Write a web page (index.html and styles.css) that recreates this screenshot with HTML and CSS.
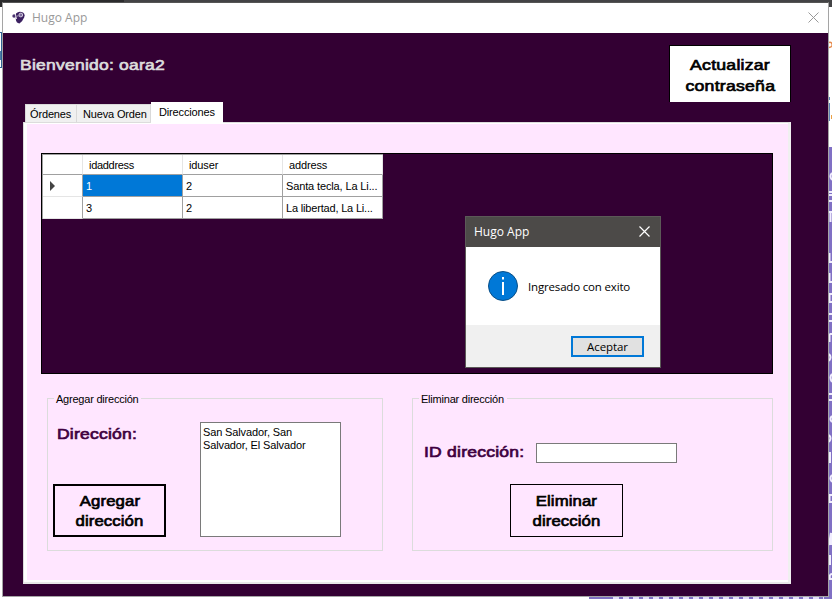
FILE: index.html
```html
<!DOCTYPE html>
<html lang="es">
<head>
<meta charset="utf-8">
<title>Hugo App</title>
<link rel="stylesheet" href="styles.css">
</head>
<body>
<div class="desktop" aria-hidden="true">
  <div class="tab-strip"></div>
  <div class="left-edge"></div>
  <div class="right-edge"></div>
  <div class="bottom-edge"></div>
  <svg class="scraps" width="832" height="599" viewBox="0 0 832 599">
    <path d="M829 42.500q2-1 3 1.500t-3 3.500" fill="none" stroke="#e68a4c" stroke-width="1.500"/>
    <path d="M829 97h1v3h-1zM829 103h1v18h-1z" fill="#5b83b5"/>
    <path d="M831 115h1v4h-1z" fill="#eba045"/>
    <g fill="none" stroke="#f1edff" stroke-width="2">
      <path d="M832 173q-3 3 0 7M829 192h3M829 195h3M829 201h3M829 212h3M830.500 212v10M829.500 253v9h3M829.500 273v9h3M832 294h-2.500v8h2.500M829 314h3M829 321h3M829.500 334v8M829.500 334h3M829 354q3 3 0 7M832 374q-3 3 0 8M829 394h3M829 400h3M832 416q-3 3 0 6M829 435q3 3 0 7M830 452v11M832 475q-3 3 0 7M832 495h-2.500v7h2.500M829 545l2-12v12M830 555v10M832 574q-3 0-2 5h2"/>
    </g>
  </svg>
</div>
<main class="window">
  <header class="titlebar">
    <svg class="logo" width="14" height="14" viewBox="0 0 14 14">
      <path d="M4 2.500Q7-.5 11 1.500q2.300 1.600 1.200 4.700Q10.800 10 7.500 12.500 4 12 3.800 8z" fill="#3b2060"/>
      <circle cx="2.100" cy="5" r="1.800" fill="#4b3470"/>
      <path d="M3.400 3.500l1.200 4.500" stroke="#fff" stroke-width=".8"/>
      <circle cx="8.800" cy="4" r="1.900" fill="#7d6c9b" stroke="#e9e4f0" stroke-width=".8"/>
      <path d="M4.500 5h2" stroke="#c9bfd8" stroke-width=".8"/>
    </svg>
    <span class="title">Hugo App</span>
    <svg class="close" width="11" height="11" viewBox="0 0 11 11"><path d="M.5.5l10 10M10.500.5l-10 10" stroke="#999" fill="none"/></svg>
  </header>
  <div class="client">
    <div class="top">
      <h1 class="welcome">Bienvenido: oara2</h1>
      <button class="btn btn-update"><span>Actualizar</span><span>contraseña</span></button>
    </div>
    <nav class="tabs">
      <span class="tab tab-a">Órdenes</span><span class="tab tab-b">Nueva Orden</span><span class="tab active">Direcciones</span>
    </nav>
    <section class="panel">
      <div class="page">
        <div class="datagrid">
          <div class="table">
            <div class="cell head"></div><div class="cell head tight">idaddress</div><div class="cell head">iduser</div><div class="cell head">address</div>
            <div class="cell rowhead"><svg width="5" height="10" viewBox="0 0 5 10"><path d="M0 0l5 5-5 5z" fill="#444"/></svg></div><div class="cell selected">1</div><div class="cell">2</div><div class="cell"><span>Santa tecla, La Li...</span></div>
            <div class="cell rowhead"></div><div class="cell">3</div><div class="cell">2</div><div class="cell snug"><span>La libertad, La Li...</span></div>
          </div>
        </div>
        <div class="groups">
          <fieldset class="group group-add">
            <legend>Agregar dirección</legend>
            <div class="col">
              <label class="label dir">Dirección:</label>
              <button class="btn btn-add"><span>Agregar</span><span>dirección</span></button>
            </div>
            <div class="memo"><span>San Salvador, San</span><span>Salvador, El Salvador</span></div>
          </fieldset>
          <fieldset class="group group-del">
            <legend>Eliminar dirección</legend>
            <div class="idrow"><div class="idl"><label class="label">ID dirección:</label></div><div class="input"></div></div>
            <button class="btn btn-del"><span>Eliminar</span><span>dirección</span></button>
          </fieldset>
        </div>
      </div>
    </section>
  </div>
</main>
<div class="dialog" role="dialog">
  <div class="dlg-title"><span>Hugo App</span>
    <svg width="11" height="11" viewBox="0 0 11 11"><path d="M.5.5l10 10M10.500.5l-10 10" stroke="#fff" stroke-width="1.200" fill="none"/></svg>
  </div>
  <div class="dlg-body">
    <svg width="30" height="30" viewBox="0 0 30 30"><circle cx="15" cy="15" r="14.500" fill="#0078d7" stroke="#0b4f86"/><path d="M14 6h2v2.500h-2zM14 11h2v13h-2z" fill="#fff"/></svg>
    <span>Ingresado con exito</span>
  </div>
  <div class="dlg-foot"><button class="ok">Aceptar</button></div>
</div>
</body>
</html>
```
FILE: styles.css
```css
* { box-sizing: border-box; }
body { margin: 0; width: 832px; height: 599px; overflow: hidden; position: relative; background: #fff; font: 11px/13px "Liberation Sans", sans-serif; color: #000; }
button { font: inherit; color: inherit; padding: 0; margin: 0; border-radius: 0; }
span { white-space: nowrap; }

.desktop { position: absolute; inset: 0; }
.tab-strip { position: absolute; left: 0; top: 0; width: 832px; height: 7px; background: linear-gradient(90deg, #2b2b2d 124px, #434345 124px); }
.left-edge { position: absolute; left: 0; top: 32px; width: 2px; height: 36px; background: linear-gradient(#fff 0 18px, #4d7ca7 18px 27px, #fff 27px); border: 1px solid #2f6496; border-width: 1px 1px 1px 0; }
.right-edge { position: absolute; left: 829px; top: 147px; width: 3px; height: 452px; background: #8070c4; }
.bottom-edge { position: absolute; left: 589px; top: 597px; width: 243px; height: 2px; background: linear-gradient(#8070c4, #8070c4) no-repeat 0 0 / 22px 2px, linear-gradient(#8070c4, #8070c4) no-repeat 235px 0 / 8px 2px, repeating-linear-gradient(90deg, #8070c4 0 4px, #e4defa 4px 10px); }
.scraps { position: absolute; left: 0; top: 0; }

.window { position: relative; margin-left: 2px; top: 2px; width: 827px; height: 595px; border: 1px solid #a5a5a5; border-top-color: #555; background: #330033; display: flex; flex-direction: column; }
.titlebar { height: 30px; background: #fff; display: flex; align-items: center; padding: 0 9px 1px 9px; }
.titlebar .title { flex: 1; margin-left: 6px; font: 12px/16px "Open Sans", sans-serif; color: #999; }
.client { padding: 12px 37px 0 20px; }
.top { display: flex; justify-content: space-between; align-items: flex-start; margin-left: -4px; }
.welcome, .label, .btn { font: 15.500px/20px "Liberation Sans", sans-serif; letter-spacing: .2px; -webkit-text-stroke: .7px; white-space: nowrap; }
.welcome, .label { transform: scaleX(1.13); transform-origin: left; }
.welcome { margin: 10px 0 0 1px; color: #dcdcdc; }
.btn { display: flex; flex-direction: column; align-items: center; justify-content: center; background: transparent; border: 1px solid #000; }
.btn span { transform: scaleX(1.08); }
.btn-update { width: 122px; height: 57px; background: #fff; border-bottom: 0; padding-top: 2px; line-height: 21px; }
.btn-update span { transform: scaleX(1.14); }

.tabs { display: flex; align-items: flex-end; height: 20px; margin-left: 2px; letter-spacing: -.15px; }
.tab { height: 18px; background: #f0f0f0; border: 1px solid #d9d9d9; border-width: 1px 1px 0 0; padding: 3px 0 0 6px; }
.tab-a { width: 52px; border-left-width: 1px; padding-left: 4px; }
.tab-b { width: 74px; }
.tab.active { width: 72px; height: 21px; margin: 0 0 -1px; background: #fff; border-color: #fff; padding: 3px 0 0 8px; position: relative; }
.panel { width: 768px; height: 462px; background: #fff; border: 1px solid #dcdcdc; border-width: 1px 3px 2px 1px; border-right-color: #f0f0f0; border-bottom-color: #e8e8e8; padding: 1px 0 2px 3px; }
.page { width: 761px; height: 456px; background: #ffe6ff; padding: 29px 14px 0; }
.datagrid { width: 732px; height: 221px; border: 1px solid #000; background: #330033; }
.table { width: 341px; height: 65px; display: grid; grid-template-columns: 40px repeat(3, 100px); grid-template-rows: 20px 22px 22px; background: #fff; border-top: 1px solid #a0a0a0; border-left: 1px solid #a0a0a0; letter-spacing: -.13px; }
.cell { border: 1px solid #a0a0a0; border-width: 0 1px 1px 0; padding: 5px 0 0 3px; overflow: hidden; }
.head { border-right-color: #e5e5e5; padding: 4px 0 0 6px; }
.tight { letter-spacing: -.3px; }
.snug { letter-spacing: -.18px; }
.rowhead { border-bottom-color: #e5e5e5; padding: 6px 0 0 7px; }
.rowhead svg { display: block; }
.selected { background: #0078d7; color: #fff; }

.groups { display: flex; gap: 29px; margin: 18px 0 0 6px; }
.group { margin: 0; border: 1px solid #dcdcdc; padding: 0; min-width: 0; height: 159px; }
.group legend { margin-left: 1px; padding: 0 3px 0 2px; height: 13px; line-height: 15px; letter-spacing: -.22px; }
.group-add { width: 336px; display: flex; gap: 34px; padding: 0 0 0 5px; }
.group-del { width: 361px; padding-left: 11px; }
.group-del legend { margin-left: -5px; }
.label { display: inline-block; color: #400040; }
.col { width: 113px; }
.dir { display: block; margin: 19px 0 40px 4px; }
.btn-add, .btn-del { width: 113px; height: 53px; letter-spacing: .1px; }
.btn-add { border-width: 2px; }
.memo { width: 141px; height: 115px; margin-top: 17px; background: #fff; border: 1px solid #7a7a7a; padding: 3px 2px; letter-spacing: -.13px; }
.memo span { display: block; }
.idrow { display: flex; align-items: flex-start; margin-top: 38px; height: 20px; }
.idl { width: 112px; margin-top: -1px; }
.input { width: 141px; height: 20px; background: #fff; border: 1px solid #7a7a7a; }
.btn-del { margin: 21px 0 0 86px; }

.dialog { position: absolute; left: 465px; top: 216px; width: 196px; height: 152px; border: 1px solid #5b5957; background: #fff; }
.dlg-title { height: 30px; background: #4c4a48; color: #fff; display: flex; align-items: center; justify-content: space-between; padding: 0 10px 1px 8px; font: 12px/16px "Open Sans", sans-serif; }
.dlg-body { height: 78px; display: flex; align-items: center; padding-left: 22px; gap: 10px; font: 11.500px/16px "Open Sans", sans-serif; letter-spacing: -.17px; }
.dlg-body span { margin-top: 2px; }
.dlg-foot { height: 42px; background: #f0f0f0; padding: 11px 16px 0 0; display: flex; justify-content: flex-end; }
.ok { width: 73px; height: 21px; background: #e1e1e1; border: 2px solid #0078d7; font: 11.500px/15px "Open Sans", sans-serif; letter-spacing: -.1px; }
```
